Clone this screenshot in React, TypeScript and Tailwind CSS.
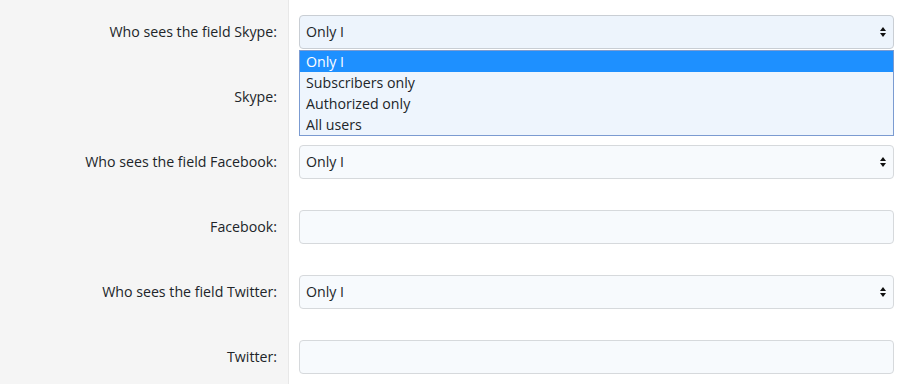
import React from "react";

const Arrows = () => (
  <svg width="8" height="12" viewBox="0 0 8 12" className="absolute right-[6px] top-1/2 -translate-y-1/2">
    <path d="M4 1 L7 5 L1 5 Z" fill="#111" />
    <path d="M1 7 L7 7 L4 11 Z" fill="#111" />
  </svg>
);

const Select = ({ open }: { open?: boolean }) => (
  <div
    className={`relative h-[34px] w-full rounded-[4px] border ${open ? "border-[#c9ced4] bg-[#edf4fc]" : "border-[#d6d9dc] bg-[#f7fafd]"} flex items-center pl-[6px] text-[#212529]`}
  >
    Only I
    <Arrows />
  </div>
);

const Input = () => (
  <div className="h-[34px] w-full rounded-[4px] border border-[#d6d9dc] bg-[#f7fafd]" />
);

const Row = ({ label, children }: { label: string; children: React.ReactNode }) => (
  <div className="flex h-[65px]">
    <div className="w-[289px] shrink-0 bg-[#f5f5f5] border-r border-[#e8e8e8] flex items-start justify-end pr-[11px] pt-[15px]">
      <div className="h-[34px] flex items-center">{label}</div>
    </div>
    <div className="flex-1 pl-[10px] pr-[6px] pt-[15px]">{children}</div>
  </div>
);

export default function App() {
  return (
    <div
      className="relative w-[900px] h-[384px] overflow-hidden bg-white text-[14.2px] text-[#212529]"
      style={{ fontFamily: '"Open Sans", sans-serif' }}
    >
      <Row label="Who sees the field Skype:">
        <Select open />
      </Row>
      <Row label="Skype:">
        <Input />
      </Row>
      <Row label="Who sees the field Facebook:">
        <Select />
      </Row>
      <Row label="Facebook:">
        <Input />
      </Row>
      <Row label="Who sees the field Twitter:">
        <Select />
      </Row>
      <Row label="Twitter:">
        <Input />
      </Row>

      <div className="absolute left-[299px] top-[50px] w-[595px] h-[86px] border border-[#7b9bd1] bg-[#eef5fd] flex flex-col">
        <div className="h-[21px] bg-[#1e90ff] text-white flex items-center pl-[6px]">Only I</div>
        <div className="h-[21px] flex items-center pl-[6px]">Subscribers only</div>
        <div className="h-[21px] flex items-center pl-[6px]">Authorized only</div>
        <div className="h-[21px] flex items-center pl-[6px]">All users</div>
      </div>
    </div>
  );
}
